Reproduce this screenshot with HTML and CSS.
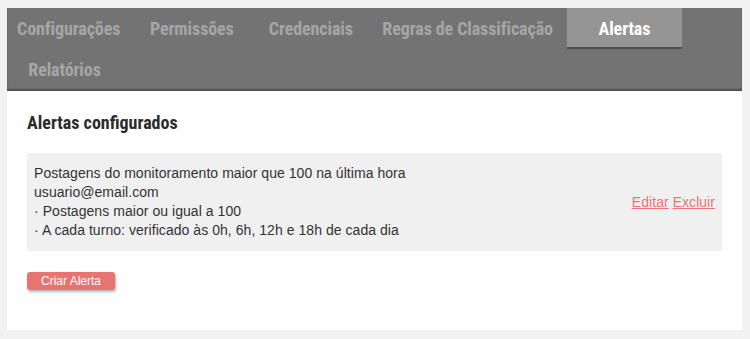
FILE: index.html
```html
<!DOCTYPE html>
<html lang="pt-BR">
<head>
<meta charset="utf-8">
<title>Alertas</title>
<link rel="stylesheet" href="styles.css">
</head>
<body>
<div class="page">
  <nav class="tabs">
    <a class="tab">Configurações</a>
    <a class="tab">Permissões</a>
    <a class="tab">Credenciais</a>
    <a class="tab">Regras de Classificação</a>
    <a class="tab active">Alertas</a>
    <a class="tab">Relatórios</a>
  </nav>
  <main class="content">
    <h2 class="title">Alertas configurados</h2>
    <div class="alert">
      <div class="alert-info">
        <div>Postagens do monitoramento maior que 100 na última hora</div>
        <div>usuario@email.com</div>
        <div>· Postagens maior ou igual a 100</div>
        <div>· A cada turno: verificado às 0h, 6h, 12h e 18h de cada dia</div>
      </div>
      <div class="alert-actions">
        <a class="link" href="#">Editar</a> <a class="link" href="#">Excluir</a>
      </div>
    </div>
    <button class="btn">Criar Alerta</button>
  </main>
</div>
</body>
</html>
```

FILE: styles.css
```css
html, body {
  background: #f1f1f1;
}
body {
  margin: 8px 8px 0 7px;
  font-family: "Liberation Sans", Arial, sans-serif;
}
.page {
  background: #fff;
}
.tabs {
  display: flex;
  flex-wrap: wrap;
  column-gap: 4px;
  background: #737373;
  box-shadow: inset 0 -2px 2px rgba(0,0,0,0.35);
  padding-bottom: 1px;
}
.tab {
  box-sizing: border-box;
  min-width: 115px;
  height: 41px;
  padding: 0 10px;
  display: flex;
  align-items: center;
  justify-content: center;
  font-family: Roboto, "Liberation Sans", sans-serif;
  font-stretch: 75%;
  font-weight: bold;
  font-size: 18px;
  color: #a6a6a6;
  white-space: nowrap;
  letter-spacing: -0.1px;
}
.tab.active {
  background: #959595;
  color: #fff;
  border-bottom: 2px solid #4d4d4d;
  padding-top: 2px;
}
.content {
  padding: 20px 20px 40px;
}
.title {
  margin: 0 0 18px;
  font-family: Roboto, "Liberation Sans", sans-serif;
  font-stretch: 75%;
  font-weight: bold;
  font-size: 18px;
  line-height: 24px;
  color: #2b2b2b;
}
.alert {
  display: flex;
  align-items: center;
  justify-content: space-between;
  background: #f0f0f0;
  padding: 11px 7px;
  font-size: 14px;
  line-height: 19px;
  color: #333;
  letter-spacing: 0.05px;
}
.alert-actions {
  font-size: 14px;
}
.link {
  color: #f07373;
  text-decoration: underline;
}
.btn {
  margin-top: 21px;
  border: 0;
  border-radius: 3px;
  background: #e87471;
  color: #fff;
  font-family: "Liberation Sans", Arial, sans-serif;
  font-size: 12px;
  line-height: 18px;
  height: 18px;
  padding: 0 14px;
  box-shadow: 1px 2px 3px rgba(0,0,0,0.3);
}
```
